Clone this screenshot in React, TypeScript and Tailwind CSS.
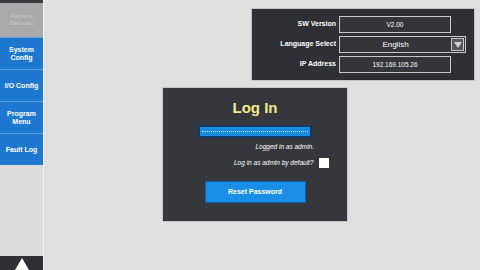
import React from 'react'

const navItems = [
  { id: 'sys', label: ['System', 'Config'] },
  { id: 'io', label: ['I/O Config'] },
  { id: 'prog', label: ['Program', 'Menu'] },
  { id: 'fault', label: ['Fault Log'] },
]

const Sidebar: React.FC = () => (
  <div className="w-[44px] h-full flex flex-col bg-[#dcdbdc] border-r border-[#f2f0f2]">
    <div className="h-[3px] bg-[#3a3b3f]" />
    <div className="h-[34px] bg-[#a9a9ab] flex flex-col items-center justify-center text-[6px] leading-[7px] font-bold text-[#c2c2c4]">
      <span>Factory</span>
      <span>Defaults</span>
    </div>
    {navItems.map((item) => (
      <div
        key={item.id}
        className="h-[32px] bg-[#1f78cf] border-t border-[#5d9fe0] flex flex-col items-center justify-center text-[7px] leading-[8px] font-bold text-white"
      >
        {item.label.map((l) => (
          <span key={l}>{l}</span>
        ))}
      </div>
    ))}
    <div className="flex-1 bg-[#dddcdd]" />
    <div className="h-[14px] bg-[#2f3036] flex items-end justify-center">
      <div className="w-0 h-0 border-l-[7px] border-r-[7px] border-b-[12px] border-l-transparent border-r-transparent border-b-white" />
    </div>
  </div>
)

const InfoRow: React.FC<{ label: string; value: string; select?: boolean }> = ({
  label,
  value,
  select,
}) => (
  <div className="flex items-center h-[18px]">
    <div className="w-[85px] text-right pr-[3px] text-[7px] font-bold text-white">{label}</div>
    <div
      className={`${select ? 'w-[127px]' : 'w-[112px]'} h-[17px] border border-[#c9c9cc] bg-[#33353a] flex items-center relative`}
    >
      <span
        className={`flex-1 text-center text-white ${select ? 'text-[8px] pr-[14px]' : 'text-[6.5px]'}`}
      >
        {value}
      </span>
      {select && (
        <div className="absolute right-[1px] top-[1px] w-[13px] h-[13px] border border-[#c9c9cc] bg-[#55575c] flex items-center justify-center">
          <div className="w-0 h-0 border-l-[4px] border-r-[4px] border-t-[6px] border-l-transparent border-r-transparent border-t-[#d0d0d2]" />
        </div>
      )}
    </div>
  </div>
)

export default function App() {
  return (
    <div
      className="w-[480px] h-[270px] flex bg-[#e0dfe0] overflow-hidden"
      style={{ fontFamily: '"Liberation Sans", Arial, sans-serif' }}
    >
      <Sidebar />
      <div className="flex-1 flex flex-col">
        <div className="flex justify-end pt-[8px] pr-[5px]">
          <div className="w-[224px] h-[73px] bg-[#2e3035] border border-[#c4c4c6] flex flex-col justify-center gap-[2px] pl-[2px]">
            <InfoRow label="SW Version" value="V2.00" />
            <InfoRow label="Language Select" value="English" select />
            <InfoRow label="IP Address" value="192.169.105.26" />
          </div>
        </div>
        <div className="pl-[118px] pt-[6px]">
          <div className="w-[186px] h-[135px] bg-[#35373c] border border-[#c8c8ca] flex flex-col items-center">
            <div className="mt-[11px] text-[15px] leading-[17px] font-bold text-[#f3ea8e]">Log In</div>
            <div className="mt-[9px] w-[114px] h-[13px] bg-[#1a8de0] border-[2px] border-[#123a66] flex items-center px-[2px]">
              <div className="flex-1 h-[2px] border-t border-dotted border-[#bfe3ff]" />
            </div>
            <div className="w-[118px] text-right mt-[4px] text-[6.5px] italic text-white">Logged in as admin.</div>
            <div className="w-[147px] flex items-center justify-end mt-[6px] gap-[5px] text-[6.5px] italic text-white">
              <span>Log in as admin by default?</span>
              <div className="w-[10px] h-[10px] bg-white" />
            </div>
            <div className="mt-[13px] w-[101px] h-[22px] bg-[#1b8ee6] border border-[#0f5fa8] flex items-center justify-center text-[7px] font-bold text-white">
              Reset Password
            </div>
          </div>
        </div>
      </div>
    </div>
  )
}
